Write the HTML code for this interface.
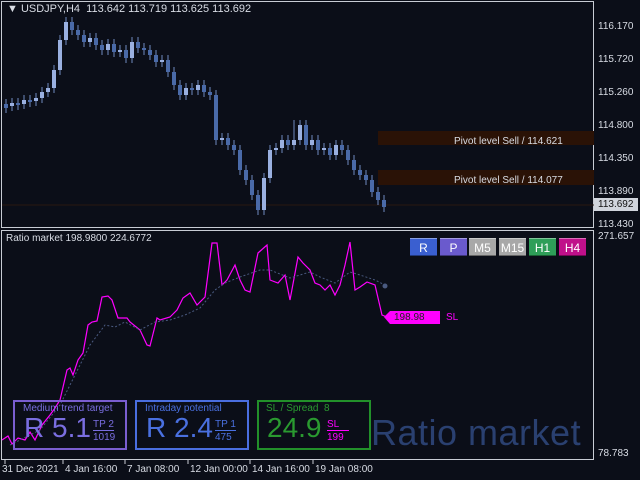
<!DOCTYPE html>
<html><head><meta charset="utf-8"><style>
html,body{margin:0;padding:0;background:#0b0e18;width:640px;height:480px;overflow:hidden;font-family:"Liberation Sans",sans-serif}
.t{position:absolute;color:#d8dce4;font-size:11px;white-space:nowrap}
.box{position:absolute;border:2px solid;box-sizing:border-box}
.btn{position:absolute;top:238px;width:27px;height:18px;font-size:12px;color:#fff;text-align:center;line-height:18px;box-sizing:border-box;border-top:1px solid rgba(255,255,255,.4);border-bottom:1px solid rgba(0,0,0,.4)}
.u{fill:#9ab0e0}.d{fill:#4a6aa8}
</style></head><body>
<svg width="640" height="480" style="position:absolute;left:0;top:0">
<rect x="1.5" y="1.5" width="592" height="226" fill="none" stroke="#c8ccd4"/>
<rect x="1.5" y="230.5" width="592" height="229" fill="none" stroke="#c8ccd4"/>
<rect x="378" y="131" width="216" height="14" fill="#2a1206"/>
<rect x="378" y="170" width="216" height="15" fill="#2a1206"/>
<line x1="2" y1="205" x2="594" y2="205" stroke="#2a1810"/>
<path fill="none" stroke="#6f8ac0" d="M6 99V113M12 98V111M18 98V110M24 95V109M30 95V107M36 93V106M42 87V103M48 83V97M54 65V93M60 35V75M66 17V45M72 17V35M78 25V40M84 30V47M90 33V47M96 33V50M102 40V55M108 39V55M114 39V57M120 45V57M126 45V63M132 37V63M138 37V53M144 43V55M150 45V60M156 50V67M162 55V67M168 55V77M174 67V90M180 80V100M186 83V100M192 83V95M198 80V95M204 80V97M210 87V100M216 90V145M222 133V145M228 133V150M234 140V155M240 145V175M246 165V185M252 175V200M258 190V215M264 173V215M270 145V183M276 143V155M282 135V153M288 135V150M294 120V150M300 120V145M306 120V150M312 135V150M318 135V155M324 143V155M330 143V160M336 140V160M342 140V155M348 145V165M354 155V175M360 165V180M366 170V185M372 175V197M378 187V205M384 195V212"/>
<g>
<rect class="d" x="4" y="104" width="4" height="4"/><rect class="u" x="10" y="103" width="4" height="3"/><rect class="d" x="16" y="103" width="4" height="2"/><rect class="u" x="22" y="100" width="4" height="4"/><rect class="d" x="28" y="100" width="4" height="2"/><rect class="u" x="34" y="98" width="4" height="3"/><rect class="u" x="40" y="92" width="4" height="6"/><rect class="u" x="46" y="88" width="4" height="4"/><rect class="u" x="52" y="70" width="4" height="18"/><rect class="u" x="58" y="40" width="4" height="30"/><rect class="u" x="64" y="22" width="4" height="18"/><rect class="d" x="70" y="22" width="4" height="8"/><rect class="d" x="76" y="30" width="4" height="5"/><rect class="d" x="82" y="35" width="4" height="7"/><rect class="u" x="88" y="38" width="4" height="4"/><rect class="d" x="94" y="38" width="4" height="7"/><rect class="d" x="100" y="45" width="4" height="5"/><rect class="u" x="106" y="44" width="4" height="6"/><rect class="d" x="112" y="44" width="4" height="8"/><rect class="u" x="118" y="50" width="4" height="2"/><rect class="d" x="124" y="50" width="4" height="8"/><rect class="u" x="130" y="42" width="4" height="16"/><rect class="d" x="136" y="42" width="4" height="6"/><rect class="d" x="142" y="48" width="4" height="2"/><rect class="d" x="148" y="50" width="4" height="5"/><rect class="d" x="154" y="55" width="4" height="7"/><rect class="u" x="160" y="60" width="4" height="2"/><rect class="d" x="166" y="60" width="4" height="12"/><rect class="d" x="172" y="72" width="4" height="13"/><rect class="d" x="178" y="85" width="4" height="10"/><rect class="u" x="184" y="88" width="4" height="7"/><rect class="d" x="190" y="88" width="4" height="2"/><rect class="u" x="196" y="85" width="4" height="5"/><rect class="d" x="202" y="85" width="4" height="7"/><rect class="d" x="208" y="92" width="4" height="3"/><rect class="d" x="214" y="95" width="4" height="45"/><rect class="u" x="220" y="138" width="4" height="2"/><rect class="d" x="226" y="138" width="4" height="7"/><rect class="d" x="232" y="145" width="4" height="5"/><rect class="d" x="238" y="150" width="4" height="20"/><rect class="d" x="244" y="170" width="4" height="10"/><rect class="d" x="250" y="180" width="4" height="15"/><rect class="d" x="256" y="195" width="4" height="15"/><rect class="u" x="262" y="178" width="4" height="32"/><rect class="u" x="268" y="150" width="4" height="28"/><rect class="u" x="274" y="148" width="4" height="2"/><rect class="u" x="280" y="140" width="4" height="8"/><rect class="d" x="286" y="140" width="4" height="5"/><rect class="u" x="292" y="140" width="4" height="5"/><rect class="u" x="298" y="125" width="4" height="15"/><rect class="d" x="304" y="125" width="4" height="20"/><rect class="u" x="310" y="140" width="4" height="5"/><rect class="d" x="316" y="140" width="4" height="10"/><rect class="u" x="322" y="148" width="4" height="2"/><rect class="d" x="328" y="148" width="4" height="7"/><rect class="u" x="334" y="145" width="4" height="10"/><rect class="d" x="340" y="145" width="4" height="5"/><rect class="d" x="346" y="150" width="4" height="10"/><rect class="d" x="352" y="160" width="4" height="10"/><rect class="d" x="358" y="170" width="4" height="5"/><rect class="d" x="364" y="175" width="4" height="5"/><rect class="d" x="370" y="180" width="4" height="12"/><rect class="d" x="376" y="192" width="4" height="8"/><rect class="d" x="382" y="200" width="4" height="7"/>
</g>
<polyline fill="none" stroke="#ff00ff" stroke-width="1.2" points="2,440 8,436 12,444 18,438 25,440 30,432 35,440 42,425 50,415 55,408 60,400 67,370 70,368 73,375 78,360 83,353 88,325 92,322 97,321 102,297 108,296 112,300 118,318 122,318 127,318 130,322 140,330 147,345 150,346 157,318 160,320 170,317 177,310 183,298 190,293 197,305 205,297 212,243 217,243 222,285 227,280 235,265 240,280 245,290 250,292 258,253 267,245 270,280 278,283 285,275 290,300 298,257 303,263 310,270 315,283 320,285 325,290 330,285 335,295 340,285 345,265 350,242 355,290 360,287 367,282 375,285 382,315 387,317"/>
<polyline fill="none" stroke="#4a5a80" stroke-dasharray="2,2" points="10,445 40,430 60,405 75,375 90,345 105,325 115,327 125,322 140,330 155,322 170,320 185,315 200,308 215,290 225,283 240,277 260,270 270,270 290,278 300,275 310,272 320,277 335,283 350,272 360,275 375,280 385,285"/>
<circle cx="385" cy="286" r="2.5" fill="#4a5a80"/>
<polygon points="384,317 390,311 440,311 440,324 390,324" fill="#ff00ff"/>
<g stroke="#c8ccd4"><line x1="5" y1="460" x2="5" y2="464"/><line x1="63" y1="460" x2="63" y2="464"/><line x1="125" y1="460" x2="125" y2="464"/><line x1="188" y1="460" x2="188" y2="464"/><line x1="250" y1="460" x2="250" y2="464"/><line x1="313" y1="460" x2="313" y2="464"/></g>
<rect x="594" y="198" width="44" height="13" fill="#d0d4dc"/>
</svg>
<div class="t" style="left:7px;top:3px">▼ USDJPY,H4 &nbsp;113.642 113.719 113.625 113.692</div>
<div class="t" style="left:454px;top:136px;font-size:10px">Pivot level Sell / 114.621</div>
<div class="t" style="left:454px;top:175px;font-size:10px">Pivot level Sell / 114.077</div>
<div class="t" style="left:598px;top:21px;font-size:10px">116.170</div>
<div class="t" style="left:598px;top:54px;font-size:10px">115.720</div>
<div class="t" style="left:598px;top:87px;font-size:10px">115.260</div>
<div class="t" style="left:598px;top:120px;font-size:10px">114.800</div>
<div class="t" style="left:598px;top:153px;font-size:10px">114.350</div>
<div class="t" style="left:598px;top:186px;font-size:10px">113.890</div>
<div class="t" style="left:598px;top:199px;font-size:10px;color:#111">113.692</div>
<div class="t" style="left:598px;top:219px;font-size:10px">113.430</div>
<div class="t" style="left:598px;top:231px;font-size:10px">271.657</div>
<div class="t" style="left:598px;top:448px;font-size:10px">78.783</div>
<div class="t" style="left:6px;top:233px;font-size:10px">Ratio market 198.9800 224.6772</div>
<div class="t" style="left:394px;top:312px;font-size:10px;color:#222">198.98</div>
<div class="t" style="left:446px;top:312px;font-size:10px;color:#ff00ff">SL</div>
<div class="btn" style="left:410px;background:#3a5fd0">R</div>
<div class="btn" style="left:440px;background:#6a5acd">P</div>
<div class="btn" style="left:469px;background:#a8a8a8">M5</div>
<div class="btn" style="left:499px;background:#a8a8a8">M15</div>
<div class="btn" style="left:529px;background:#2e9e58">H1</div>
<div class="btn" style="left:559px;background:#c0108a">H4</div>
<div class="box" style="left:13px;top:400px;width:114px;height:50px;border-color:#7a5ed0"></div>
<div class="t" style="left:23px;top:403px;color:#7a6ee0;font-size:10px">Medium trend target</div>
<div class="t" style="left:24px;top:412px;color:#7a6ee0;font-size:28px">R 5.1</div>
<div class="t" style="left:93px;top:419px;color:#7a6ee0;font-size:10px;border-bottom:1px solid #7a6ee0">TP 2</div>
<div class="t" style="left:93px;top:432px;color:#7a6ee0;font-size:10px">1019</div>
<div class="box" style="left:135px;top:400px;width:114px;height:50px;border-color:#4a6ee0"></div>
<div class="t" style="left:145px;top:403px;color:#4a70e0;font-size:10px">Intraday potential</div>
<div class="t" style="left:146px;top:412px;color:#4a70e0;font-size:28px">R 2.4</div>
<div class="t" style="left:215px;top:419px;color:#4a70e0;font-size:10px;border-bottom:1px solid #4a70e0">TP 1</div>
<div class="t" style="left:215px;top:432px;color:#4a70e0;font-size:10px">475</div>
<div class="box" style="left:257px;top:400px;width:114px;height:50px;border-color:#22902a"></div>
<div class="t" style="left:266px;top:403px;color:#2a9a30;font-size:10px">SL / Spread &nbsp;8</div>
<div class="t" style="left:267px;top:412px;color:#2a9a30;font-size:28px">24.9</div>
<div class="t" style="left:327px;top:419px;color:#ff00ff;font-size:10px;border-bottom:1px solid #ff00ff;width:22px">SL</div>
<div class="t" style="left:327px;top:432px;color:#ff00ff;font-size:10px">199</div>
<div class="t" style="left:371px;top:412px;color:#2a4070;font-size:36px;letter-spacing:0.5px">Ratio market</div>
<div class="t" style="left:2px;top:464px;font-size:10px">31 Dec 2021</div>
<div class="t" style="left:65px;top:464px;font-size:10px">4 Jan 16:00</div>
<div class="t" style="left:127px;top:464px;font-size:10px">7 Jan 08:00</div>
<div class="t" style="left:190px;top:464px;font-size:10px">12 Jan 00:00</div>
<div class="t" style="left:252px;top:464px;font-size:10px">14 Jan 16:00</div>
<div class="t" style="left:315px;top:464px;font-size:10px">19 Jan 08:00</div>
</body></html>
